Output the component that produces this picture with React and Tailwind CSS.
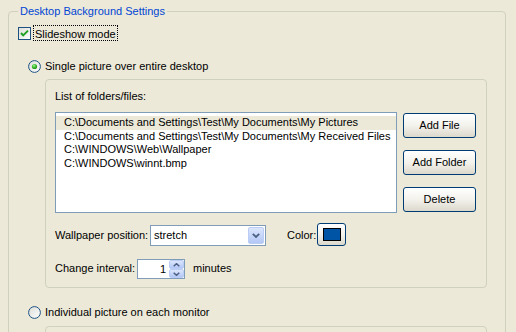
function Checkbox() {
  return (
    <svg width="13" height="13" viewBox="0 0 13 13" className="block">
      <defs>
        <linearGradient id="cbFill" x1="0" y1="0" x2="1" y2="1">
          <stop offset="0" stopColor="#dcdcd7" />
          <stop offset="1" stopColor="#ffffff" />
        </linearGradient>
      </defs>
      <rect x="0.5" y="0.5" width="12" height="12" fill="url(#cbFill)" stroke="#1c5180" />
      <polyline points="3,6 5.2,8.4 10,3.6" fill="none" stroke="#21a121" strokeWidth="2" />
    </svg>
  )
}

function Radio({ checked }) {
  return (
    <svg width="13" height="13" viewBox="0 0 13 13" className="block">
      <defs>
        <linearGradient id="rdFill" x1="0" y1="0" x2="1" y2="1">
          <stop offset="0" stopColor="#dcdcd7" />
          <stop offset="1" stopColor="#ffffff" />
        </linearGradient>
        <radialGradient id="rdDot" cx="0.4" cy="0.35" r="0.7">
          <stop offset="0" stopColor="#a8f0a0" />
          <stop offset="0.5" stopColor="#3cbf2e" />
          <stop offset="1" stopColor="#1f8a16" />
        </radialGradient>
      </defs>
      <circle cx="6.5" cy="6.5" r="5.9" fill="url(#rdFill)" stroke="#1c5180" strokeWidth="1" />
      {checked && <circle cx="6.5" cy="6.5" r="2.6" fill="url(#rdDot)" />}
    </svg>
  )
}

function XpButton({ children, className = '' }) {
  return (
    <div
      className={
        'flex items-center justify-center rounded-[3px] border border-[#003c74] bg-linear-to-b from-[#ffffff] via-[#f3f2ec] to-[#dcd8cc] ' +
        className
      }
    >
      {children}
    </div>
  )
}

const archivos = [
  'C:\\Documents and Settings\\Test\\My Documents\\My Pictures',
  'C:\\Documents and Settings\\Test\\My Documents\\My Received Files',
  'C:\\WINDOWS\\Web\\Wallpaper',
  'C:\\WINDOWS\\winnt.bmp',
]

export default function App() {
  return (
    <div className="w-[516px] h-[332px] overflow-hidden bg-[#ece9d8] pl-[8px] pt-[5px] font-['Liberation_Sans',Arial,sans-serif] text-[11px] text-black">
      <fieldset className="w-[498px] h-[400px] min-w-0 border border-[#d0d0bf] rounded-[4px] pl-[9px]">
        <legend className="px-[2px] leading-[13px] text-[#0046d5]">Desktop Background Settings</legend>

        {/* Casilla de presentación */}
        <div className="mt-[7px] flex items-start h-[16px]">
          <span className="mt-[2px]">
            <Checkbox />
          </span>
          <span className="ml-[2px] h-[16px] border border-dotted border-black px-[1px] pt-[3px] leading-[11px]">
            Slideshow mode
          </span>
        </div>

        <div className="mt-[19px] ml-[10px] flex items-center h-[13px]">
          <Radio checked />
          <span className="ml-[4px] leading-[13px]">Single picture over entire desktop</span>
        </div>

        <fieldset className="mt-[6px] ml-[27px] w-[442px] h-[209px] min-w-0 border border-[#d0d0bf] rounded-[4px] pl-[9px]">
          <div className="mt-[10px] leading-[13px]">List of folders/files:</div>

          <div className="mt-[9px] flex items-start">
            <div className="w-[342px] h-[101px] border border-[#7f9db9] bg-white pt-[3px] px-0">
              {archivos.map((a, i) => (
                <div
                  key={a}
                  className={'h-[13.7px] pl-[8px] leading-[13px] whitespace-nowrap ' + (i === 0 ? 'bg-[#ece9d8]' : '')}
                >
                  {a}
                </div>
              ))}
            </div>
            <div className="ml-[6px] mt-[1px] flex flex-col gap-[12px]">
              <XpButton className="w-[73px] h-[25px]">Add File</XpButton>
              <XpButton className="w-[73px] h-[25px]">Add Folder</XpButton>
              <XpButton className="w-[73px] h-[25px]">Delete</XpButton>
            </div>
          </div>

          <div className="mt-[10px] flex items-start h-[23px]">
            <span className="w-[95px] mt-[6px] leading-[13px]">Wallpaper position:</span>
            <div className="mt-[2px] w-[116px] h-[21px] border border-[#7f9db9] bg-white flex items-center">
              <span className="flex-1 pl-[3px] leading-[13px]">stretch</span>
              <div className="w-[16px] h-[17px] mr-[1px] rounded-[2px] border border-[#bacdf7] bg-linear-to-b from-[#dce6fd] to-[#b3c7f5] flex items-center justify-center">
                <svg width="8" height="5" viewBox="0 0 8 5" className="block">
                  <polyline points="0.8,0.8 4,4 7.2,0.8" fill="none" stroke="#4d6185" strokeWidth="1.8" />
                </svg>
              </div>
            </div>
            <span className="ml-[21px] w-[30px] mt-[6px] leading-[13px]">Color:</span>
            <XpButton className="w-[29px] h-[23px]">
              <div className="w-[18px] h-[13px] border border-black bg-[#0054a6]" />
            </XpButton>
          </div>

          <div className="mt-[13px] flex items-start h-[20px]">
            <span className="w-[82px] mt-[3px] leading-[13px]">Change interval:</span>
            <div className="w-[48px] h-[20px] border border-[#7f9db9] bg-white flex items-stretch">
              <span className="flex-1 text-right pr-[3px] leading-[18px]">1</span>
              <div className="w-[15px] flex flex-col">
                <div className="h-[9px] rounded-[2px] border border-[#bacdf7] bg-linear-to-b from-[#dce6fd] to-[#b3c7f5] flex items-center justify-center">
                  <svg width="7" height="4" viewBox="0 0 7 4" className="block">
                    <polyline points="0.7,3.3 3.5,0.7 6.3,3.3" fill="none" stroke="#4d6185" strokeWidth="1.5" />
                  </svg>
                </div>
                <div className="h-[9px] rounded-[2px] border border-[#bacdf7] bg-linear-to-b from-[#dce6fd] to-[#b3c7f5] flex items-center justify-center">
                  <svg width="7" height="4" viewBox="0 0 7 4" className="block">
                    <polyline points="0.7,0.7 3.5,3.3 6.3,0.7" fill="none" stroke="#4d6185" strokeWidth="1.5" />
                  </svg>
                </div>
              </div>
            </div>
            <span className="ml-[8px] mt-[3px] leading-[13px]">minutes</span>
          </div>
        </fieldset>

        <div className="mt-[18px] ml-[10px] flex items-center h-[13px]">
          <Radio />
          <span className="ml-[4px] leading-[13px]">Individual picture on each monitor</span>
        </div>

        <fieldset className="mt-[7px] ml-[27px] w-[442px] h-[100px] min-w-0 border border-[#d0d0bf] rounded-[4px]" />
      </fieldset>
    </div>
  )
}
